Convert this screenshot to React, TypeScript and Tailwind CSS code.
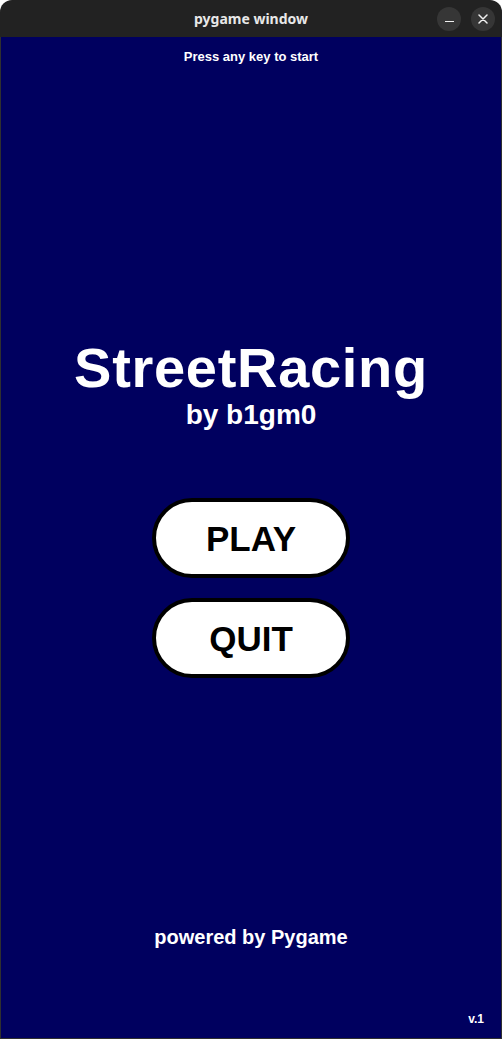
import { FC } from "react";

const MenuButton: FC<{ label: string; className?: string }> = ({ label, className }) => (
  <button
    className={`w-[198px] h-[80px] rounded-full border-4 border-black bg-white text-black text-[35px] font-bold leading-none ${className ?? ""}`}
  >
    {label}
  </button>
);

const App: FC = () => {
  return (
    <div className="w-[502px] h-[1039px] flex flex-col font-['Liberation_Sans',Arial,sans-serif]">
      {/* title bar */}
      <div className="h-[37px] shrink-0 bg-[#222222] rounded-t-[12px] grid grid-cols-[1fr_auto_1fr] items-center">
        <div />
        <span className="font-['Noto_Sans',sans-serif] font-bold text-[14px] text-[#e8e8e8]">
          pygame window
        </span>
        <div className="flex justify-end items-center gap-[10px] pr-[7px]">
          <div className="w-[24px] h-[24px] rounded-full bg-[#363636] flex items-center justify-center">
            <div className="w-[9px] h-[1.5px] bg-[#f0f0f0] mt-[6px]" />
          </div>
          <div className="w-[24px] h-[24px] rounded-full bg-[#363636] flex items-center justify-center">
            <svg width="10" height="10" viewBox="0 0 10 10">
              <path d="M1 1L9 9M9 1L1 9" stroke="#f0f0f0" strokeWidth="1.5" strokeLinecap="round" />
            </svg>
          </div>
        </div>
      </div>

      {/* game surface */}
      <div className="flex-1 bg-[#00005f] border-x border-b border-[#2f2f2f] flex flex-col items-center text-white font-bold">
        <p className="mt-[12px] text-[13px] leading-[15px]">Press any key to start</p>

        <h1 className="mt-[276px] text-[56px] leading-none tracking-[0.7px]">StreetRacing</h1>
        <p className="mt-[5px] text-[28px] leading-none">by b1gm0</p>

        <MenuButton label="PLAY" className="mt-[69px]" />
        <MenuButton label="QUIT" className="mt-[20px]" />

        <p className="mt-auto text-[20px] leading-[20px]">powered by Pygame</p>
        <p className="self-end mt-[65px] mb-[12px] pr-[17px] text-[12px] leading-[14px]">v.1</p>
      </div>
    </div>
  );
};

export default App;
